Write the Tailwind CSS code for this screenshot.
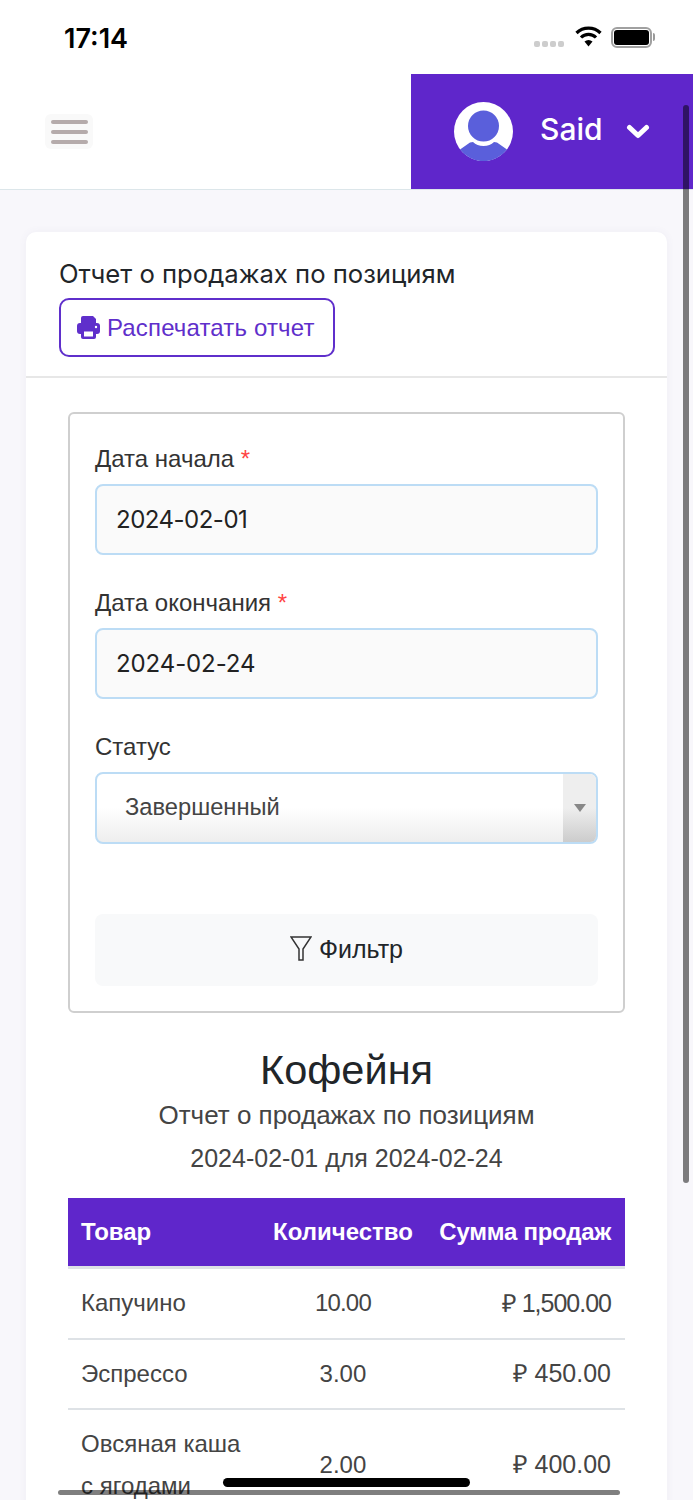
<!DOCTYPE html>
<html lang="ru">
<head>
<meta charset="utf-8">
<script src="https://cdn.jsdelivr.net/npm/@tailwindcss/browser@4"></script>
<title>Отчет о продажах</title>
</head>
<body class="bg-[#f8f7fb]">
<div class="relative h-[1500px] w-[693px] overflow-hidden font-['Liberation_Sans',sans-serif] text-[#212529]">

    <!-- Status bar -->
    <div class="flex h-[74px] items-center justify-between bg-white pr-[38px] pl-[64px]">
        <span class="translate-y-px font-['Inter',sans-serif] text-[27px] leading-none font-semibold text-black">17:14</span>
        <div class="flex items-center">
            <div class="mt-[14px] mr-[11px] flex gap-[2px]">
                <span class="h-[6px] w-[6px] rounded-[2px] bg-[#cdcdcd]"></span>
                <span class="h-[6px] w-[6px] rounded-[2px] bg-[#cdcdcd]"></span>
                <span class="h-[6px] w-[6px] rounded-[2px] bg-[#cdcdcd]"></span>
                <span class="h-[6px] w-[6px] rounded-[2px] bg-[#cdcdcd]"></span>
            </div>
            <svg class="mr-[9px] -translate-y-px" width="27" height="21" viewBox="0 0 27 21">
                <path d="M1.500 7a17 17 0 0 1 24 0" fill="none" stroke="#000" stroke-width="3.200"/>
                <path d="M6 11.500a10.500 10.500 0 0 1 15 0" fill="none" stroke="#000" stroke-width="3.200"/>
                <path d="M9.500 15.500a6 6 0 0 1 8 0l-4 5z" fill="#000"/>
            </svg>
            <div class="flex items-center">
                <div class="flex h-[21px] w-[41px] items-center justify-center rounded-[6px] border-2 border-[#a0a0a0]">
                    <div class="h-[15px] w-[35px] rounded-[3px] bg-black"></div>
                </div>
                <div class="ml-px h-[8px] w-[2px] rounded-r-sm bg-[#9a9a9a]"></div>
            </div>
        </div>
    </div>

    <!-- Top header -->
    <div class="flex h-[116px] items-stretch justify-between border-b border-[#dce6ea] bg-white">
        <div class="ml-[45px] flex h-[35px] w-[48px] translate-y-[40px] flex-col items-center justify-center gap-[6px] rounded-md bg-[#f9f9f9]">
            <span class="h-[4px] w-[37px] rounded-full bg-[#b5abab]"></span>
            <span class="h-[4px] w-[37px] rounded-full bg-[#b5abab]"></span>
            <span class="h-[4px] w-[37px] rounded-full bg-[#b5abab]"></span>
        </div>
        <div class="flex w-[282px] items-center bg-[#5f26cb] pl-[43px]">
            <svg width="59" height="59" viewBox="0 0 59 59">
                <circle cx="29.500" cy="29.500" r="29.500" fill="#fff"/>
                <circle cx="29.500" cy="24" r="15.500" fill="#5a5fdb"/>
                <path d="M6 47.500l10-7 3-.5q4 4 10.500 4t10.500-4l3 .5 10 7a29.500 29.500 0 0 1-47 0z" fill="#5a5fdb"/>
            </svg>
            <span class="ml-[27px] -translate-y-[3px] font-['Inter',sans-serif] text-[30px] leading-none font-medium text-white">Said</span>
            <svg class="ml-[23px] -translate-y-px" width="24" height="16" viewBox="0 0 24 16">
                <path d="M3.500 4.500l8.500 8 8.500-8" fill="none" stroke="#fff" stroke-width="5" stroke-linecap="round" stroke-linejoin="round"/>
            </svg>
        </div>
    </div>

    <!-- Report card -->
    <div class="mx-[26px] mt-[42px] rounded-[10px] bg-white shadow-[0_0_8px_rgba(90,80,130,0.06)]">
        <div class="h-[146px] border-b-2 border-[#e7e7e7] px-[33px] pt-[26px]">
            <h1 class="font-['Inter',sans-serif] text-[25.650px] leading-[32px]">Отчет о продажах по позициям</h1>
            <button class="mt-[8px] flex h-[59px] w-[276px] items-center gap-[7px] rounded-[10px] border-2 border-[#5f2fcb] pl-[16px] text-[24px] tracking-[0.15px] text-[#5f2fcb]">
                <svg width="23" height="23" viewBox="0 0 23 23">
                    <path d="M4 9V2q0-2 2-2h10l3 3v6z" fill="#5f2fcb"/>
                    <rect x="0" y="7" width="23" height="11" rx="3" fill="#5f2fcb"/>
                    <rect x="4" y="13" width="15" height="10" rx="2" fill="#5f2fcb"/>
                    <rect x="7" y="15.500" width="9" height="5" fill="#fff"/>
                    <circle cx="19" cy="11" r="1.200" fill="#fff"/>
                </svg>
                Распечатать отчет
            </button>
        </div>

        <div class="px-[42px] pt-[34px]">
            <!-- Filter form -->
            <form class="h-[601px] rounded-[6px] border-2 border-[#cfcfcf] px-[25px] pt-[29px]">
                <label class="block text-[24px] leading-[32px] text-[#333]">Дата начала <span class="text-[#f44]">*</span></label>
                <div class="mt-[9px] flex h-[71px] items-center rounded-[8px] border-2 border-[#bcdcf5] bg-[#fafafa] pl-[19px] font-['Inter',sans-serif] text-[24px] tracking-[-0.5px] text-[#222]">2024-02-01</div>

                <label class="mt-[32px] block text-[24px] leading-[32px] text-[#333]">Дата окончания <span class="text-[#f44]">*</span></label>
                <div class="mt-[9px] flex h-[71px] items-center rounded-[8px] border-2 border-[#bcdcf5] bg-[#fafafa] pl-[19px] font-['Inter',sans-serif] text-[24px] tracking-[-0.1px] text-[#222]">2024-02-24</div>

                <label class="mt-[32px] block text-[24px] leading-[32px] text-[#333]">Статус</label>
                <div class="mt-[9px] flex h-[72px] overflow-hidden rounded-[8px] border-2 border-[#bcdcf5] bg-[linear-gradient(#fff_50%,#eee)]">
                    <span class="flex flex-1 items-center pl-[28px] text-[23.700px] text-[#444]">Завершенный</span>
                    <span class="flex w-[33px] items-center justify-center bg-[linear-gradient(#eee_50%,#ccc)]">
                        <svg width="12" height="8" viewBox="0 0 12 8"><path d="M0 0h12L6 8z" fill="#888"/></svg>
                    </span>
                </div>

                <button type="button" class="mt-[70px] flex h-[72px] w-full items-center justify-center gap-[7px] rounded-[8px] bg-[#f8f9fa] text-[25px] text-[#212529]">
                    <svg class="-mt-[4px]" width="22" height="25" viewBox="0 0 22 25">
                        <path d="M1 1h20l-8 12v11h-4V13z" fill="none" stroke="#333" stroke-width="1.500"/>
                    </svg>
                    Фильтр
                </button>
            </form>

            <!-- Report heading -->
            <div class="pt-[33px] text-center">
                <h2 class="text-[41.500px] leading-[48px]">Кофейня</h2>
                <p class="-mt-px text-[26px] leading-[44px] text-[#444]">Отчет о продажах по позициям</p>
                <p class="text-[25px] leading-[42px] text-[#444]">2024-02-01 для 2024-02-24</p>
            </div>

            <!-- Items table -->
            <table class="mt-[19px] w-full border-collapse text-[24px] text-[#444]">
                <thead>
                    <tr class="h-[69px] bg-[#5f26cb] font-bold text-white">
                        <th class="w-[205px] pl-[13px] text-left">Товар</th>
                        <th class="w-[139px] text-center">Количество</th>
                        <th class="pr-[14px] text-right tracking-[-0.25px] whitespace-nowrap">Сумма продаж</th>
                    </tr>
                </thead>
                <tbody>
                    <tr class="h-[72px] border-t-[3px] border-b-2 border-t-[#dee2e6] border-b-[#dee2e6]">
                        <td class="pl-[13px]">Капучино</td>
                        <td class="text-center tracking-[-0.8px]">10.00</td>
                        <td class="pr-[14px] text-right text-[25px] tracking-[-1px]">₽ 1,500.00</td>
                    </tr>
                    <tr class="h-[70px] border-b-2 border-[#dee2e6]">
                        <td class="pl-[13px]">Эспрессо</td>
                        <td class="text-center">3.00</td>
                        <td class="pr-[14px] text-right text-[25px]">₽ 450.00</td>
                    </tr>
                    <tr class="border-b-2 border-[#dee2e6]">
                        <td class="py-[13px] pl-[13px] leading-[42px]">Овсяная каша<br>с ягодами</td>
                        <td class="text-center">2.00</td>
                        <td class="pr-[14px] text-right text-[25px]">₽ 400.00</td>
                    </tr>
                </tbody>
            </table>
        </div>
    </div>

    <!-- Overlay scrollbars and home indicator -->
    <div class="absolute top-[105px] left-[683px] h-[1078px] w-[6px] rounded-full bg-black/50"></div>
    <div class="absolute top-[1490px] left-[58px] h-[5px] w-[562px] rounded-full bg-black/50"></div>
    <div class="absolute top-[1478px] left-[223px] h-[9px] w-[247px] rounded-full bg-black"></div>
</div>
</body>
</html>
